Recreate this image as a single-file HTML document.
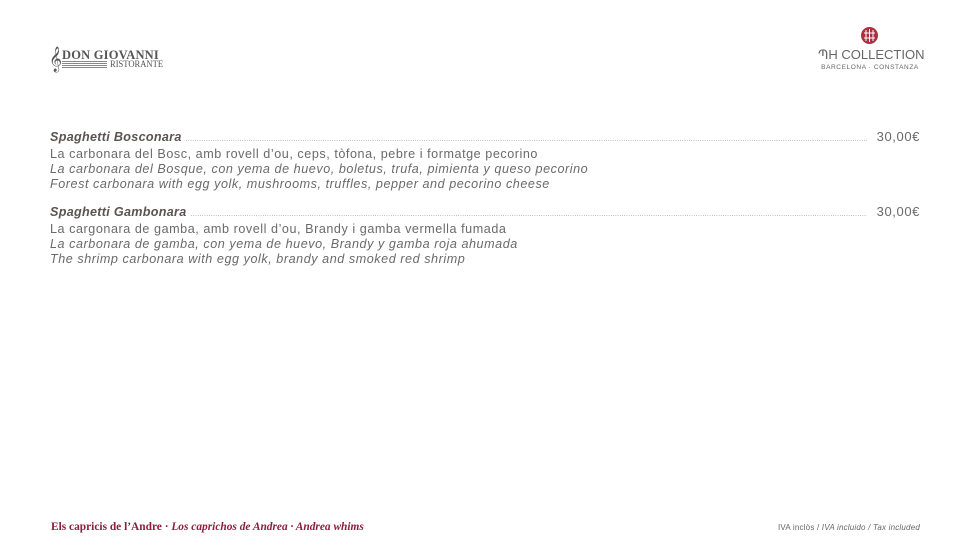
<!DOCTYPE html>
<html><head><meta charset="utf-8"><style>
body{margin:0;width:970px;height:548px;background:#fff;position:relative;font-family:"Liberation Sans",sans-serif;overflow:hidden}
.menu{position:absolute;left:50px;width:870px;color:#6a6a6a;font-size:12.6px;line-height:15px;letter-spacing:0.55px}
.row{display:flex;align-items:baseline}
.t{font-weight:bold;font-style:italic;color:#5a5352;white-space:nowrap;letter-spacing:0.3px}
.dots{flex:1;overflow:hidden;white-space:nowrap;margin:0 10px 0 4px;font-size:7px;letter-spacing:0.3px;color:#888}
.p{color:#6a6a6a;letter-spacing:0.6px;font-size:13px}
i{font-style:italic}
</style></head><body>
<div style="position:absolute;left:49px;top:47px;color:#555;font-family:'Liberation Serif',serif">
<div style="position:absolute;left:0;top:0;font-size:22px;line-height:24px">𝄞</div>
<div style="position:absolute;left:13px;top:1px;font-size:12.5px;font-weight:bold;white-space:nowrap;letter-spacing:0.2px">DON GIOVANNI</div>
<div style="position:absolute;left:13px;top:14px;width:45px;height:7px;background:repeating-linear-gradient(#888 0 1px,transparent 1px 2px)"></div>
<div style="position:absolute;left:61px;top:12px;font-size:9px;white-space:nowrap;transform:scaleX(0.95);transform-origin:left">RISTORANTE</div>
</div>
<svg style="position:absolute;left:861px;top:27px" width="17" height="17" viewBox="0 0 17 17"><circle cx="8.5" cy="8.5" r="8.5" fill="#a8323f"/><g stroke="#fff" stroke-width="1" fill="none"><path d="M5 3v11M8.5 2v13M12 3v11M3 6h11M3 11h11"/></g></svg>
<div style="position:absolute;left:818px;top:47px;width:104px;text-align:center;color:#666;font-size:13px;white-space:nowrap">ՊH COLLECTION</div>
<div style="position:absolute;left:818px;top:64px;width:104px;text-align:center;color:#666;font-size:6.5px;letter-spacing:0.6px;white-space:nowrap">BARCELONA · CONSTANZA</div>
<div class="menu" style="top:129px">
<div class="row"><span class="t">Spaghetti Bosconara</span><span class="dots">............................................................................................................................................................................................................................................................................................................................................................................................................................</span><span class="p">30,00€</span></div>
<div>La carbonara del Bosc, amb rovell d’ou, ceps, tòfona, pebre i formatge pecorino</div>
<div><i>La carbonara del Bosque, con yema de huevo, boletus, trufa, pimienta y queso pecorino</i></div>
<div><i>Forest carbonara with egg yolk, mushrooms, truffles, pepper and pecorino cheese</i></div>
</div>
<div class="menu" style="top:204px">
<div class="row"><span class="t">Spaghetti Gambonara</span><span class="dots">............................................................................................................................................................................................................................................................................................................................................................................................................................</span><span class="p">30,00€</span></div>
<div>La cargonara de gamba, amb rovell d’ou, Brandy i gamba vermella fumada</div>
<div><i>La carbonara de gamba, con yema de huevo, Brandy y gamba roja ahumada</i></div>
<div><i>The shrimp carbonara with egg yolk, brandy and smoked red shrimp</i></div>
</div>
<div style="position:absolute;left:51px;top:521px;color:#8a1f3a;font-family:'Liberation Serif',serif;font-size:11.4px;font-weight:bold;white-space:nowrap">Els capricis de l’Andre · <i>Los caprichos de Andrea · Andrea whims</i></div>
<div style="position:absolute;right:50px;top:523px;color:#666;font-size:8px;white-space:nowrap;letter-spacing:0.2px">IVA inclòs / <i>IVA incluido / Tax included</i></div>
</body></html>
